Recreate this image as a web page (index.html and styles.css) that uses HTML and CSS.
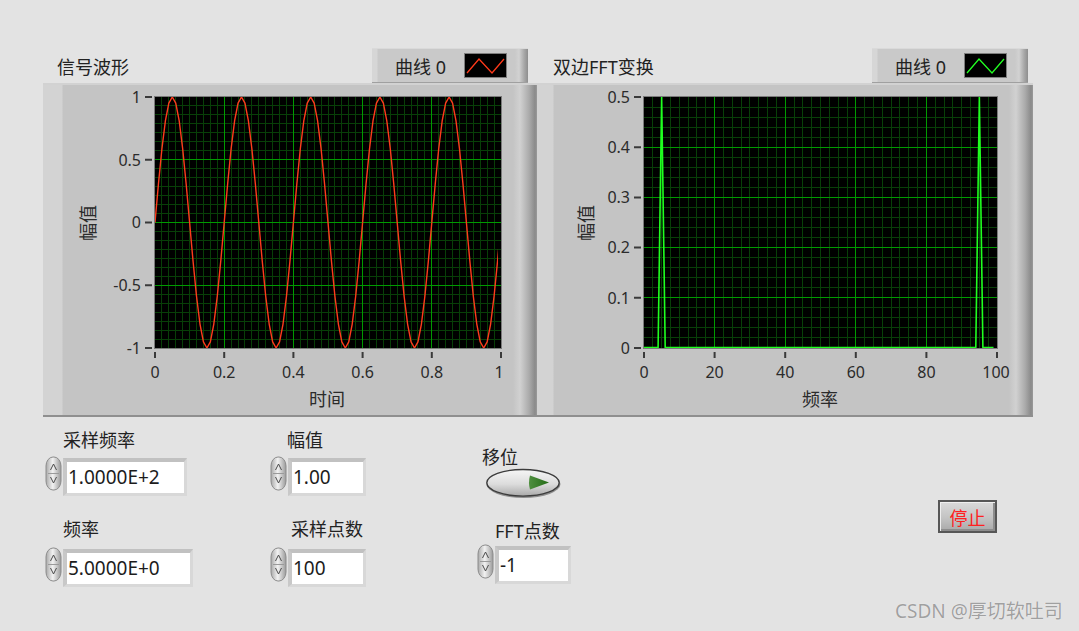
FILE: index.html
```html
<!DOCTYPE html>
<html lang="zh">
<head>
<meta charset="utf-8">
<title>LabVIEW 前面板</title>
<link rel="stylesheet" href="styles.css">
</head>
<body>
<div class="page">
  <div class="graphs">
    <section class="graph graph-left">
      <div class="graph-head">
        <span class="graph-title">信号波形</span>
        <div class="legend">
          <span class="legend-text">曲线 0</span>
          <svg class="swatch" width="43" height="25" viewBox="0 0 43 25"><rect x="0.5" y="0.5" width="42" height="24" fill="#000" stroke="#7d7d7d"/><polyline points="3,20 15,6 28,20 40,6" fill="none" stroke="#ff3a1a" stroke-width="1.3"/></svg>
        </div>
      </div>
      <div class="panel panel-left">
        <svg class="chart" width="494" height="334" viewBox="0 0 494 334">
          <defs><clipPath id="clipL"><rect x="110" y="11" width="345" height="257"/></clipPath></defs>
          <rect x="112" y="14" width="346" height="251" fill="#000"/>
          <path class="minor" d="M118.5 14V265M125.5 14V265M132.5 14V265M139.5 14V265M146.5 14V265M153.5 14V265M160.5 14V265M167.5 14V265M174.5 14V265M188.5 14V265M195.5 14V265M201.5 14V265M208.5 14V265M215.5 14V265M222.5 14V265M229.5 14V265M236.5 14V265M243.5 14V265M257.5 14V265M264.5 14V265M271.5 14V265M278.5 14V265M285.5 14V265M291.5 14V265M298.5 14V265M305.5 14V265M312.5 14V265M326.5 14V265M333.5 14V265M340.5 14V265M347.5 14V265M354.5 14V265M361.5 14V265M368.5 14V265M374.5 14V265M381.5 14V265M395.5 14V265M402.5 14V265M409.5 14V265M416.5 14V265M423.5 14V265M430.5 14V265M437.5 14V265M444.5 14V265M451.5 14V265M112 22.5H458M112 31.5H458M112 40.5H458M112 49.5H458M112 58.5H458M112 67.5H458M112 85.5H458M112 94.5H458M112 103.5H458M112 112.5H458M112 121.5H458M112 130.5H458M112 148.5H458M112 157.5H458M112 166.5H458M112 175.5H458M112 184.5H458M112 193.5H458M112 211.5H458M112 220.5H458M112 229.5H458M112 238.5H458M112 247.5H458M112 256.5H458"/>
          <path class="major" d="M181.5 14V265M250.5 14V265M319.5 14V265M388.5 14V265M112 76.5H458M112 139.5H458M112 202.5H458"/>
          <g clip-path="url(#clipL)">
            <g transform="translate(112 0)">
              <polyline id="sinePeriod" class="sine" points="0,139.5 3.46,100.72 6.92,65.73 10.38,37.97 13.84,20.14 17.3,14 20.76,20.14 24.22,37.97 27.68,65.73 31.14,100.72 34.6,139.5 38.06,178.28 41.52,213.27 44.98,241.03 48.44,258.86 51.9,265 55.36,258.86 58.82,241.03 62.28,213.27 65.74,178.28 69.2,139.5"/>
              <use href="#sinePeriod" x="69.2"/>
              <use href="#sinePeriod" x="138.4"/>
              <use href="#sinePeriod" x="207.6"/>
              <use href="#sinePeriod" x="276.8"/>
            </g>
          </g>
          <rect x="111.5" y="13.5" width="347" height="252" fill="none" stroke="#7a7a7a"/>
          <path class="tick" d="M102 14H109M102 76.75H109M102 139.5H109M102 202.25H109M102 265H109M112 269V275M181.2 269V275M250.4 269V275M319.6 269V275M388.8 269V275M458 269V275"/>
          <g class="ylab">
            <text x="98" y="14" dy="0.36em">1</text>
            <text x="98" y="76.75" dy="0.36em">0.5</text>
            <text x="98" y="139.5" dy="0.36em">0</text>
            <text x="98" y="202.25" dy="0.36em">-0.5</text>
            <text x="98" y="265" dy="0.36em">-1</text>
          </g>
          <g class="xlab">
            <text x="112" y="289" dy="0.36em">0</text>
            <text x="181.2" y="289" dy="0.36em">0.2</text>
            <text x="250.4" y="289" dy="0.36em">0.4</text>
            <text x="319.6" y="289" dy="0.36em">0.6</text>
            <text x="388.8" y="289" dy="0.36em">0.8</text>
            <text x="456" y="289" dy="0.36em">1</text>
          </g>
          <text class="axis-title" x="284" y="317" dy="0.36em">时间</text>
          <text class="axis-title" x="46" y="140" dy="0.36em" transform="rotate(-90 46 140)">幅值</text>
        </svg>
      </div>
    </section>

    <section class="graph graph-right">
      <div class="graph-head">
        <span class="graph-title">双边FFT变换</span>
        <div class="legend">
          <span class="legend-text">曲线 0</span>
          <svg class="swatch" width="43" height="25" viewBox="0 0 43 25"><rect x="0.5" y="0.5" width="42" height="24" fill="#000" stroke="#7d7d7d"/><polyline points="3,20 15,6 28,20 40,6" fill="none" stroke="#22ff22" stroke-width="1.3"/></svg>
        </div>
      </div>
      <div class="panel panel-right">
        <svg class="chart" width="496" height="334" viewBox="0 0 496 334">
          <rect x="107" y="14" width="353" height="251" fill="#000"/>
          <path class="minor" d="M115.5 14V265M124.5 14V265M133.5 14V265M142.5 14V265M151.5 14V265M159.5 14V265M168.5 14V265M186.5 14V265M195.5 14V265M204.5 14V265M212.5 14V265M221.5 14V265M230.5 14V265M239.5 14V265M257.5 14V265M265.5 14V265M274.5 14V265M283.5 14V265M292.5 14V265M301.5 14V265M310.5 14V265M327.5 14V265M336.5 14V265M345.5 14V265M354.5 14V265M362.5 14V265M371.5 14V265M380.5 14V265M398.5 14V265M407.5 14V265M415.5 14V265M424.5 14V265M433.5 14V265M442.5 14V265M451.5 14V265M107 24.5H460M107 34.5H460M107 44.5H460M107 54.5H460M107 74.5H460M107 84.5H460M107 94.5H460M107 104.5H460M107 124.5H460M107 134.5H460M107 144.5H460M107 154.5H460M107 174.5H460M107 184.5H460M107 194.5H460M107 204.5H460M107 224.5H460M107 234.5H460M107 244.5H460M107 254.5H460"/>
          <path class="major" d="M177.5 14V265M248.5 14V265M318.5 14V265M389.5 14V265M107 64.5H460M107 114.5H460M107 164.5H460M107 214.5H460"/>
          <polyline class="fft" points="107,264.5 121.1,264.5 124.65,14 128.2,264.5 438.8,264.5 442.35,14 445.9,264.5 456.5,264.5"/>
          <rect x="106.5" y="13.5" width="354" height="252" fill="none" stroke="#7a7a7a"/>
          <path class="tick" d="M97 14H104M97 64.2H104M97 114.4H104M97 164.6H104M97 214.8H104M97 265H104M107 269V275M177.6 269V275M248.2 269V275M318.8 269V275M389.4 269V275M460 269V275"/>
          <g class="ylab">
            <text x="93" y="14" dy="0.36em">0.5</text>
            <text x="93" y="64.2" dy="0.36em">0.4</text>
            <text x="93" y="114.4" dy="0.36em">0.3</text>
            <text x="93" y="164.6" dy="0.36em">0.2</text>
            <text x="93" y="214.8" dy="0.36em">0.1</text>
            <text x="93" y="265" dy="0.36em">0</text>
          </g>
          <g class="xlab">
            <text x="107" y="289" dy="0.36em">0</text>
            <text x="177.6" y="289" dy="0.36em">20</text>
            <text x="248.2" y="289" dy="0.36em">40</text>
            <text x="318.8" y="289" dy="0.36em">60</text>
            <text x="389.4" y="289" dy="0.36em">80</text>
            <text x="459" y="289" dy="0.36em">100</text>
          </g>
          <text class="axis-title" x="283" y="317" dy="0.36em">频率</text>
          <text class="axis-title" x="50" y="140" dy="0.36em" transform="rotate(-90 50 140)">幅值</text>
        </svg>
      </div>
    </section>
  </div>

  <div class="controls">
    <div class="col col-a">
      <div class="label lab-a1">采样频率</div>
      <div class="num num-a1">
        <svg class="spin" width="17" height="35" viewBox="0 0 17 35"><defs><linearGradient id="sg1" x1="0" x2="1" y1="0" y2="0"><stop offset="0" stop-color="#a9a9a9"/><stop offset="0.45" stop-color="#f2f2f2"/><stop offset="1" stop-color="#9a9a9a"/></linearGradient></defs><rect x="1" y="1" width="15" height="33" rx="7" ry="9" fill="url(#sg1)" stroke="#8c8c8c"/><path d="M3 17.5H14" stroke="#9a9a9a"/><path d="M5.5 14L8.5 8L11.5 14M5.5 21L8.5 27L11.5 21" fill="none" stroke="#4a4a4a"/></svg>
        <div class="box w124">1.0000E+2</div>
      </div>
      <div class="label lab-a2">频率</div>
      <div class="num num-a2">
        <svg class="spin" width="17" height="35" viewBox="0 0 17 35"><defs><linearGradient id="sg2" x1="0" x2="1" y1="0" y2="0"><stop offset="0" stop-color="#a9a9a9"/><stop offset="0.45" stop-color="#f2f2f2"/><stop offset="1" stop-color="#9a9a9a"/></linearGradient></defs><rect x="1" y="1" width="15" height="33" rx="7" ry="9" fill="url(#sg2)" stroke="#8c8c8c"/><path d="M3 17.5H14" stroke="#9a9a9a"/><path d="M5.5 14L8.5 8L11.5 14M5.5 21L8.5 27L11.5 21" fill="none" stroke="#4a4a4a"/></svg>
        <div class="box w130">5.0000E+0</div>
      </div>
    </div>

    <div class="col col-b">
      <div class="label lab-b1">幅值</div>
      <div class="num num-b1">
        <svg class="spin" width="17" height="35" viewBox="0 0 17 35"><defs><linearGradient id="sg3" x1="0" x2="1" y1="0" y2="0"><stop offset="0" stop-color="#a9a9a9"/><stop offset="0.45" stop-color="#f2f2f2"/><stop offset="1" stop-color="#9a9a9a"/></linearGradient></defs><rect x="1" y="1" width="15" height="33" rx="7" ry="9" fill="url(#sg3)" stroke="#8c8c8c"/><path d="M3 17.5H14" stroke="#9a9a9a"/><path d="M5.5 14L8.5 8L11.5 14M5.5 21L8.5 27L11.5 21" fill="none" stroke="#4a4a4a"/></svg>
        <div class="box w78">1.00</div>
      </div>
      <div class="label lab-b2">采样点数</div>
      <div class="num num-b2">
        <svg class="spin" width="17" height="35" viewBox="0 0 17 35"><defs><linearGradient id="sg4" x1="0" x2="1" y1="0" y2="0"><stop offset="0" stop-color="#a9a9a9"/><stop offset="0.45" stop-color="#f2f2f2"/><stop offset="1" stop-color="#9a9a9a"/></linearGradient></defs><rect x="1" y="1" width="15" height="33" rx="7" ry="9" fill="url(#sg4)" stroke="#8c8c8c"/><path d="M3 17.5H14" stroke="#9a9a9a"/><path d="M5.5 14L8.5 8L11.5 14M5.5 21L8.5 27L11.5 21" fill="none" stroke="#4a4a4a"/></svg>
        <div class="box w78">100</div>
      </div>
    </div>

    <div class="col col-c">
      <div class="label lab-c1">移位</div>
      <svg class="toggle" width="77" height="31" viewBox="0 0 77 31"><defs><linearGradient id="tgl" x1="0" x2="0" y1="0" y2="1"><stop offset="0" stop-color="#f6f6f6"/><stop offset="0.55" stop-color="#dcdcdc"/><stop offset="1" stop-color="#a9a9a9"/></linearGradient><linearGradient id="arw" x1="0" x2="1" y1="0" y2="0"><stop offset="0" stop-color="#4f8f3f"/><stop offset="1" stop-color="#236b16"/></linearGradient></defs><ellipse cx="38.5" cy="16" rx="37" ry="14" fill="#8e8e8e"/><ellipse cx="38" cy="14.8" rx="36.2" ry="13.3" fill="url(#tgl)" stroke="#3c3c3c" stroke-width="1.4"/><path d="M45 7.5Q43 14.5 45 21.5L64 14.5Z" fill="url(#arw)"/></svg>
      <div class="label lab-c2">FFT点数</div>
      <div class="num num-c2">
        <svg class="spin" width="17" height="35" viewBox="0 0 17 35"><defs><linearGradient id="sg5" x1="0" x2="1" y1="0" y2="0"><stop offset="0" stop-color="#a9a9a9"/><stop offset="0.45" stop-color="#f2f2f2"/><stop offset="1" stop-color="#9a9a9a"/></linearGradient></defs><rect x="1" y="1" width="15" height="33" rx="7" ry="9" fill="url(#sg5)" stroke="#8c8c8c"/><path d="M3 17.5H14" stroke="#9a9a9a"/><path d="M5.5 14L8.5 8L11.5 14M5.5 21L8.5 27L11.5 21" fill="none" stroke="#4a4a4a"/></svg>
        <div class="box w76">-1</div>
      </div>
    </div>

    <div class="col col-d">
      <div class="stop">停止</div>
    </div>
  </div>

  <div class="watermark">CSDN @厚切软吐司</div>
</div>
</body>
</html>
```

FILE: styles.css
```css
html, body {
  margin: 0;
  padding: 0;
  background: #e3e3e3;
}

.page {
  position: relative;
  width: 1079px;
  height: 631px;
  overflow: hidden;
  background: #e3e3e3;
  font-family: "Noto Sans", "Noto Sans CJK SC", sans-serif;
  color: #222;
}

/* ---------- graphs ---------- */
.graphs {
  display: flex;
  padding: 48px 0 0 43px;
}

.graph-left { width: 494px; }
.graph-right { width: 496px; }

.graph-head {
  display: flex;
  align-items: center;
  height: 35px;
}

.graph-left .graph-head { padding-left: 14px; }
.graph-right .graph-head { padding-left: 16px; }

.graph-title {
  font-size: 18px;
  color: #222;
}

.legend {
  margin-left: auto;
  width: 156px;
  height: 35px;
  box-sizing: border-box;
  display: flex;
  align-items: center;
  padding: 0 21px 0 23px;
  background: linear-gradient(to right, #d6d6d6 0, #d6d6d6 5px, #c9c9c9 6px, #c9c9c9 calc(100% - 13px), #d2d2d2 calc(100% - 9px), #a9a9a9 calc(100% - 4px), #8e8e8e 100%);
  box-shadow: inset 0 1px 0 #dadada, inset 0 -1px 0 #a0a0a0;
}

.graph-left .legend { margin-right: 9px; }
.graph-right .legend { margin-right: 5px; }

.legend-text {
  font-size: 18px;
  color: #222;
}

.swatch {
  margin-left: auto;
  display: block;
}

.panel {
  height: 334px;
  box-sizing: border-box;
  box-shadow: inset 0 2px 0 #d2d2d2, inset 0 -2px 0 #8f8f8f;
}

.panel-left {
  background: linear-gradient(to right, #d3d3d3 0, #d3d3d3 19px, #c4c4c4 20px, #c4c4c4 calc(100% - 24px), #d1d1d1 calc(100% - 17px), #ababab calc(100% - 8px), #8a8a8a calc(100% - 2px), #9a9a9a 100%);
}

.panel-right {
  background: linear-gradient(to right, #d3d3d3 0, #d3d3d3 16px, #c4c4c4 17px, #c4c4c4 calc(100% - 24px), #d1d1d1 calc(100% - 17px), #ababab calc(100% - 8px), #8a8a8a calc(100% - 2px), #9a9a9a 100%);
}

.chart {
  display: block;
}

.minor {
  stroke: #083f08;
  stroke-width: 1;
  fill: none;
}

.major {
  stroke: #009a00;
  stroke-width: 1;
  fill: none;
}

.sine {
  fill: none;
  stroke: #ff3b1c;
  stroke-width: 1.4;
  stroke-linejoin: round;
}

.fft {
  fill: none;
  stroke: #1fff1f;
  stroke-width: 1.6;
}

.tick {
  stroke: #3a3a3a;
  stroke-width: 2;
  fill: none;
}

.ylab text {
  text-anchor: end;
  font-size: 16px;
  fill: #2b2b2b;
}

.xlab text {
  text-anchor: middle;
  font-size: 16px;
  fill: #2b2b2b;
}

.axis-title {
  text-anchor: middle;
  font-size: 18px;
  fill: #2b2b2b;
}

/* ---------- controls ---------- */
.controls {
  display: flex;
  padding-left: 45px;
}

.col {
  display: flex;
  flex-direction: column;
  align-items: flex-start;
}

.col-a { width: 225px; }
.col-b { width: 207px; }
.col-c { width: 120px; }
.col-d { margin-left: 341px; }

.label {
  height: 20px;
  line-height: 20px;
  font-size: 18px;
  color: #222;
  white-space: nowrap;
}

.lab-a1 { margin-top: 13px; padding-left: 18px; }
.lab-a2 { margin-top: 23px; padding-left: 18px; }
.lab-b1 { margin-top: 13px; padding-left: 17px; }
.lab-b2 { margin-top: 23px; padding-left: 21px; }
.lab-c1 { margin-top: 30px; padding-left: 5px; }
.lab-c2 { margin-top: 22px; padding-left: 18px; }

.num {
  display: flex;
  align-items: flex-start;
  gap: 1px;
}

.num-a1, .num-b1 { margin-top: 6px; }
.num-a2, .num-b2 { margin-top: 8px; }
.num-c2 { margin-top: 3px; }

.spin {
  display: block;
  flex: none;
}

.box {
  height: 38px;
  box-sizing: border-box;
  margin-top: 2px;
  border-style: solid;
  border-width: 4px 3px 3px 4px;
  border-color: #c1c1c1 #d8d8d8 #d8d8d8 #c8c8c8;
  background: #fff;
  font-size: 19px;
  line-height: 31px;
  padding-left: 1px;
  color: #1c1c1c;
  white-space: nowrap;
}

.w124 { width: 124px; }
.w130 { width: 130px; }
.w78 { width: 78px; }
.w76 { width: 76px; }

.toggle {
  display: block;
  margin: 1px 0 0 8px;
}

.stop {
  margin-top: 83px;
  width: 59px;
  height: 33px;
  box-sizing: border-box;
  border: 2px solid #575757;
  background: linear-gradient(#dadada, #c3c3c3 55%, #a9a9a9);
  box-shadow: inset 1px 1px 0 #efefef, inset -2px -2px 0 #8d8d8d;
  color: #ff2020;
  font-size: 18px;
  display: flex;
  align-items: center;
  justify-content: center;
}

.watermark {
  position: absolute;
  left: 895px;
  top: 599px;
  font-size: 19px;
  line-height: 24px;
  color: #a0a0a0;
  text-shadow: 0 0 1px #ffffff;
  white-space: nowrap;
}
```
